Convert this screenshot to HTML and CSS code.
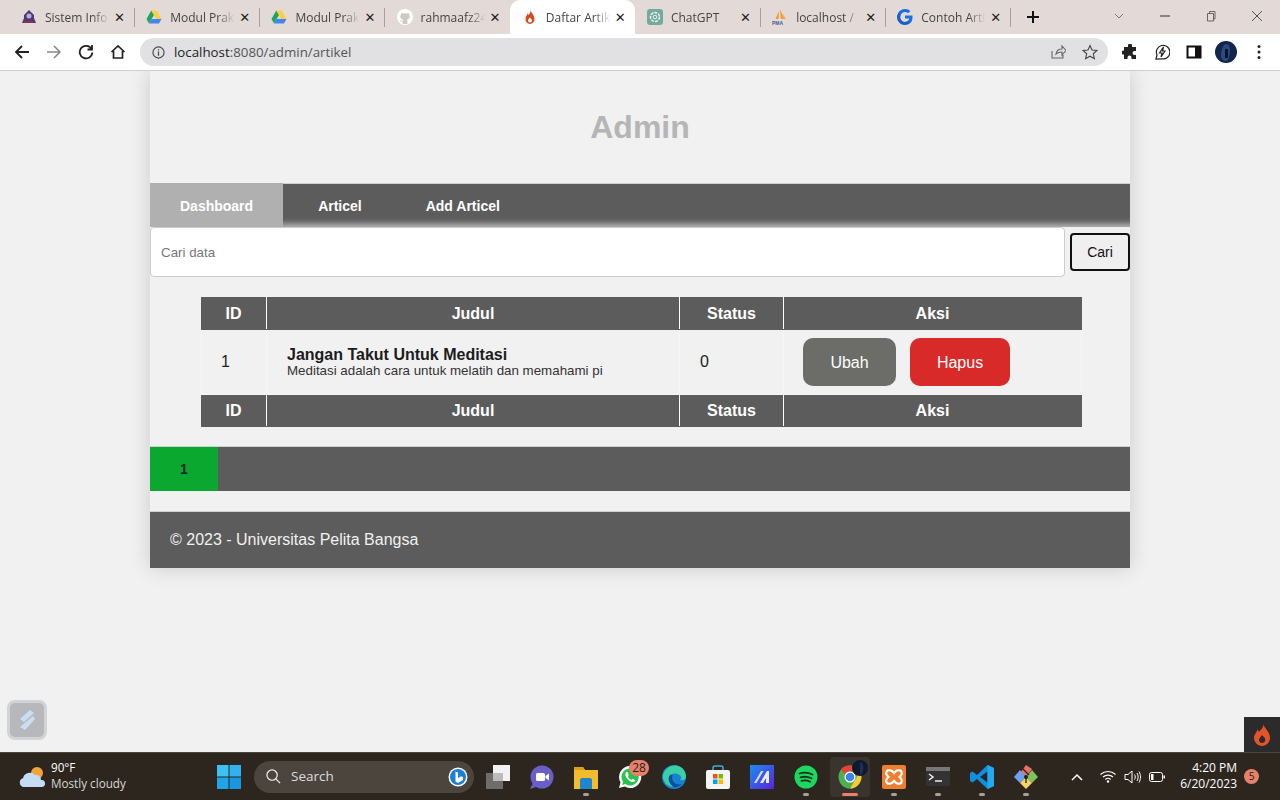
FILE: index.html
```html
<!DOCTYPE html>
<html lang="id">
<head>
<meta charset="utf-8">
<title>Daftar Artikel</title>
<link rel="stylesheet" href="styles.css">
</head>
<body>
<div class="tabstrip">
  <div class="tab sep">
    <svg class="fav" viewBox="0 0 16 16"><path d="M8 1 13 6v3l2 5H1l2-5V6z" fill="#4b3a78"/><circle cx="8" cy="7" r="2.500" fill="#b9aed8"/><path d="M3 12h10v2H3z" fill="#8a2f52"/></svg>
    <span class="tab-title">Sistem Info</span><span class="tab-x">✕</span>
  </div>
  <div class="tab sep">
    <svg class="fav" viewBox="0 0 16 16"><path d="M5.300 1.500.5 10 3 14.500 8 6z" fill="#1fa463"/><path d="M5.300 1.500h5.400L15.500 10h-5.200z" fill="#ffcf3f"/><path d="M3 14.500h10l2.500-4.500H5.600z" fill="#4285f4"/></svg>
    <span class="tab-title">Modul Prak</span><span class="tab-x">✕</span>
  </div>
  <div class="tab sep">
    <svg class="fav" viewBox="0 0 16 16"><path d="M5.300 1.500.5 10 3 14.500 8 6z" fill="#1fa463"/><path d="M5.300 1.500h5.400L15.500 10h-5.200z" fill="#ffcf3f"/><path d="M3 14.500h10l2.500-4.500H5.600z" fill="#4285f4"/></svg>
    <span class="tab-title">Modul Prak</span><span class="tab-x">✕</span>
  </div>
  <div class="tab">
    <svg class="fav" viewBox="0 0 16 16"><circle cx="8" cy="8" r="8" fill="#fff"/><path d="M5.600 15v-2.400C3.800 13 3.200 12 2.800 11c1 .2 1.500 1 2.800 1 0-.6.2-1 .5-1.300C4.300 10.400 3.300 9.400 3.300 7.600c0-.8.3-1.400.7-1.900-.2-.5-.1-1.200.1-1.800.8 0 1.400.4 1.900.7a7 7 0 0 1 4 0c.5-.3 1.100-.7 1.900-.7.2.6.3 1.300.1 1.800.4.500.7 1.100.7 1.900 0 1.800-1 2.800-2.800 3.100.3.300.5.800.5 1.500V15z" fill="#cfc8c5"/></svg>
    <span class="tab-title">rahmaafz24</span><span class="tab-x">✕</span>
  </div>
  <div class="tab active">
    <svg class="fav" viewBox="0 0 16 16"><path d="M8.500 1c.5 2.500-1 3.500-2 5-.3-.8-.7-1.200-1.200-1.500C5.300 6.500 3.500 7.500 3.500 10.300 3.500 13 5.500 15 8 15s4.500-2 4.500-4.700C12.500 6.500 9.800 4.500 8.500 1zM8 13.500c-1.200 0-2-.9-2-2 0-1.300 1.200-1.800 1.700-3 1 .9 2.300 1.800 2.300 3 0 1.100-.8 2-2 2z" fill="#d8491f"/></svg>
    <span class="tab-title">Daftar Artik</span><span class="tab-x">✕</span>
  </div>
  <div class="tab sep">
    <svg class="fav" viewBox="0 0 16 16"><rect width="16" height="16" rx="3" fill="#74aa9c"/><circle cx="8" cy="8" r="4.500" fill="none" stroke="#e8f2ef" stroke-width="1.500" stroke-dasharray="3 1"/><circle cx="8" cy="8" r="1.800" fill="none" stroke="#e8f2ef"/></svg>
    <span class="tab-title">ChatGPT</span><span class="tab-x">✕</span>
  </div>
  <div class="tab sep">
    <svg class="fav" viewBox="0 0 16 16"><path d="M8 0c1 3 3 6 4 10H9zM7 2 6.500 10H3.500z" fill="#f29a1f"/><path d="M10 4c1.500 2 3 4 4 6h-2z" fill="#e8b04a"/><text class="pma" x="0" y="15.500">PMA</text></svg>
    <span class="tab-title">localhost /</span><span class="tab-x">✕</span>
  </div>
  <div class="tab sep">
    <svg class="fav" viewBox="0 0 16 16"><path d="M15.500 8.200c0-.6 0-1.100-.1-1.600H8v3h4.300c-.2 1-.8 1.900-1.700 2.500v2h2.700c1.500-1.500 2.200-3.500 2.200-5.900z" fill="#1a6fe0"/><path d="M8 16c2.100 0 3.900-.7 5.300-1.900l-2.700-2c-.7.500-1.600.8-2.600.8-2 0-3.800-1.400-4.400-3.200H.9v2.100A8 8 0 0 0 8 16z" fill="#1a5fc8"/><path d="M3.600 9.700a4.800 4.800 0 0 1 0-3.100V4.500H.9a8 8 0 0 0 0 7.300z" fill="#1a5fc8"/><path d="M8 3.100c1.200 0 2.200.4 3.100 1.200l2.300-2.300A7.700 7.700 0 0 0 8 0 8 8 0 0 0 .9 4.500l2.700 2.100C4.200 4.500 6 3.100 8 3.100z" fill="#1a6fe0"/></svg>
    <span class="tab-title">Contoh Arti</span><span class="tab-x">✕</span>
  </div>
  <svg class="newtab" viewBox="0 0 14 14"><path d="M7 1v12M1 7h12" stroke="#111" stroke-width="2"/></svg>
  <div class="winctl">
    <svg viewBox="0 0 12 12"><path d="M2 4l4 4 4-4" fill="none" stroke="#777"/></svg>
    <svg viewBox="0 0 12 12"><path d="M1 6h10" stroke="#333"/></svg>
    <svg viewBox="0 0 12 12"><path d="M2.500 3.500h6v7.500h-6zM4.500 3.500V1.500h5.500v7.500H8.500" fill="none" stroke="#666"/></svg>
    <svg viewBox="0 0 12 12"><path d="M1 1l10 10M11 1 1 11" stroke="#555"/></svg>
  </div>
</div>

<div class="toolbar">
  <div class="navbtns">
    <svg viewBox="0 0 16 16"><path d="M15 8H2M8 2 2 8l6 6" fill="none" stroke="#222" stroke-width="1.800"/></svg>
    <svg viewBox="0 0 16 16"><path d="M1 8h13M8 2l6 6-6 6" fill="none" stroke="#888" stroke-width="1.500"/></svg>
    <svg viewBox="0 0 16 16"><path d="M13.500 5A6.300 6.300 0 1 0 14.300 8.500M14 1v4.500H9.500" fill="none" stroke="#222" stroke-width="1.800"/></svg>
    <svg viewBox="0 0 16 16"><path d="M1.500 8 8 2l6.500 6M3.500 7v7h9V7" fill="none" stroke="#222" stroke-width="1.700"/></svg>
  </div>
  <div class="omnibox">
    <svg class="info" viewBox="0 0 14 14"><circle cx="7" cy="7" r="6" fill="none" stroke="#444" stroke-width="1.200"/><path d="M7 6v4.500M7 3.500v1.300" stroke="#444" stroke-width="1.300"/></svg>
    <span class="url"><b class="host">localhost</b>:8080/admin/artikel</span>
    <svg class="omni-ic share" viewBox="0 0 16 16"><path d="M2 7v7h11v-3M6 10c.5-3 3-5 6-5V2l4 4.500-4 4.500V8c-2.500 0-4.500.5-6 2z" fill="none" stroke="#666" stroke-width="1.100"/></svg>
    <svg class="omni-ic" viewBox="0 0 16 16"><path d="M8 1.500 10 6l5 .5-3.700 3.300 1.100 4.900L8 12.200l-4.400 2.500 1.100-4.900L1 6.500 6 6z" fill="none" stroke="#444" stroke-width="1.100"/></svg>
  </div>
  <div class="exts">
    <svg viewBox="0 0 16 16"><path d="M6 1.500a2 2 0 0 1 4 0V3h4v4h-1.500a2 2 0 0 0 0 4H14v4H9.500v-1.500a2 2 0 0 0-4 0V15H2v-4.500h-.5a2 2 0 0 1 0-4H2V3h4z" fill="#222"/></svg>
    <svg viewBox="0 0 16 16"><path d="M2 15 3 11A6.800 6.800 0 1 1 8 14.800zM9.500 3 5.500 9H8l-1 4 4-6H8.500z" fill="none" stroke="#222" stroke-width="1.200"/></svg>
    <svg viewBox="0 0 16 16"><path d="M1.500 2.500h13v11h-13z" fill="#fff" stroke="#111" stroke-width="2"/><path d="M9 2.500h5.500v11H9z" fill="#111"/></svg>
    <svg class="avatar" viewBox="0 0 22 22"><circle cx="11" cy="11" r="11" fill="#12264a"/><path d="M11 3c3 0 4 3 4 6s-1 11-4 11-5-2-5-6 2-11 5-11z" fill="#2a4a80"/><path d="M10 8h3v9h-3z" fill="#0a1226"/></svg>
    <svg class="kebab" viewBox="0 0 4 16"><circle cx="2" cy="2.500" r="1.500" fill="#222"/><circle cx="2" cy="8" r="1.500" fill="#222"/><circle cx="2" cy="13.500" r="1.500" fill="#222"/></svg>
  </div>
</div>

<div class="viewport">
  <div class="container">
    <header class="site-head"><h1>Admin</h1></header>
    <nav class="site-nav">
      <a class="nav-link current">Dashboard</a>
      <a class="nav-link">Articel</a>
      <a class="nav-link">Add Articel</a>
    </nav>
    <form class="search">
      <input class="search-input" type="text" placeholder="Cari data">
      <button class="search-btn" type="button">Cari</button>
    </form>
    <table class="data">
      <colgroup><col class="c-id"><col class="c-title"><col class="c-status"><col class="c-act"></colgroup>
      <thead><tr><th>ID</th><th>Judul</th><th>Status</th><th>Aksi</th></tr></thead>
      <tbody>
        <tr>
          <td>1</td>
          <td><strong class="art-title">Jangan Takut Untuk Meditasi</strong><span class="art-desc">Meditasi adalah cara untuk melatih dan memahami pi</span></td>
          <td>0</td>
          <td><div class="acts"><a class="btn ubah">Ubah</a><a class="btn hapus">Hapus</a></div></td>
        </tr>
      </tbody>
      <tfoot><tr><th>ID</th><th>Judul</th><th>Status</th><th>Aksi</th></tr></tfoot>
    </table>
    <div class="pager"><a class="page-cur">1</a></div>
    <footer class="site-foot">© 2023 - Universitas Pelita Bangsa</footer>
  </div>

  <div class="float-s">
    <svg viewBox="0 0 24 24"><path d="M5 11 15 2l4 3L9 14zM5 19l13-11 2 3-10 11z" fill="#c9def3"/></svg>
  </div>
  <div class="ci-bar">
    <svg viewBox="0 0 18 22"><path d="M10 0c1 4-2 5-4 8-.4-1.300-1-2-1.800-2.500C4.500 8 1 10 1 14c0 4 3.500 8 8 8s8-4 8-8C17 8 12 5 10 0zM9 19c-2 0-3-1.500-3-3 0-2 2-3 3-5 1.500 1.500 3.300 3 3.300 5 0 1.500-1.300 3-3.300 3z" fill="#e5532b"/></svg>
  </div>
</div>

<div class="taskbar">
  <div class="weather">
    <svg viewBox="0 0 26 22"><circle cx="18" cy="7" r="6" fill="#f2a33a"/><path d="M5 21a4.500 4.500 0 0 1-1-8.800A7 7 0 0 1 16 9a5 5 0 0 1 6 5 3.500 3.500 0 0 1 1 7z" fill="#c4dcf5"/></svg>
    <div class="w-text"><span class="w-temp">90°F</span><span class="w-desc">Mostly cloudy</span></div>
  </div>
  <div class="slot">
    <svg class="ic" viewBox="0 0 24 24"><path d="M0 0h11.500v11.500H0z" fill="#3fc0f2"/><path d="M12.500 0H24v11.500H12.500z" fill="#2fb2ee"/><path d="M0 12.500h11.500V24H0z" fill="#1ea4e8"/><path d="M12.500 12.500H24V24H12.500z" fill="#1897e0"/></svg>
  </div>
  <div class="tb-search">
    <svg class="mag" viewBox="0 0 16 16"><circle cx="6.500" cy="6.500" r="5.500" fill="none" stroke="#eee" stroke-width="1.300"/><path d="M10.500 10.500 15 15" stroke="#eee" stroke-width="1.300"/></svg>
    <span class="s-label">Search</span>
    <svg class="bing" viewBox="0 0 20 20"><circle cx="10" cy="10" r="9.500" fill="#fff"/><circle cx="10" cy="10" r="8" fill="#1b7fd6"/><path d="M7.500 4.500 10 5.500V11l3-1.500-2-1 4 1.500v3L10 16l-2.500-1.500z" fill="#fff"/></svg>
  </div>
  <div class="slot">
    <svg class="ic" viewBox="0 0 24 24"><rect x="0" y="8" width="17" height="16" fill="#6f6c69"/><rect x="7" y="0" width="17" height="16" fill="#f2f2f2"/><rect x="7" y="8" width="10" height="8" fill="#bdbbb9"/></svg>
  </div>
  <div class="slot">
    <svg class="ic" viewBox="0 0 24 24"><circle cx="12" cy="12" r="11.500" fill="#6a5fc8"/><path d="M0 24l3-6 3 4z" fill="#6a5fc8"/><rect x="6" y="8" width="9" height="8" rx="1.500" fill="#fff"/><path d="M15.500 11 19 8.500v7L15.500 13z" fill="#fff"/></svg>
  </div>
  <div class="slot dot">
    <svg class="ic" viewBox="0 0 24 24"><path d="M0 2h9l2 3h13v19H0z" fill="#f4bc2c"/><path d="M0 2h9l2 3H0z" fill="#d9a21e"/><path d="M6 15c0-1 1-2 2-2h8c1 0 2 1 2 2v9H6z" fill="#1c86d1"/></svg>
  </div>
  <div class="slot">
    <svg class="ic" viewBox="0 0 24 24"><path d="M12 1a11 11 0 0 0-9.500 16.500L1 23l5.700-1.500A11 11 0 1 0 12 1z" fill="#fff"/><path d="M12 3.500a8.500 8.500 0 0 0-7 13.300L4.200 20l3.300-.9A8.500 8.500 0 1 0 12 3.500z" fill="#2ac34f"/><path d="M8.500 7c-1 .5-1.500 2-1 3.500 1 3 3.500 5.500 6.500 6.500 1.500.3 3-.5 3.300-1.800l-2.600-1.500-1.200 1.200c-1.500-.7-3-2-3.700-3.700l1-1.200L9.500 7z" fill="#fff"/></svg>
    <span class="count">28</span>
  </div>
  <div class="slot">
    <svg class="ic" viewBox="0 0 24 24"><circle cx="12" cy="12" r="12" fill="#1681d4"/><path d="M1 10C3 3 9 0 14 .5 20 1.200 24 6 24 12c0 2.500-3 4-6 3 1.500-1 2-3-.5-5-3-2.500-8-2-10 1-2 3 0 8 4 11C6 22 0 17 1 10z" fill="#3ad0a6"/><path d="M7.500 11c-2 3 0 8 4 11 2.500.5 6-.5 8.500-3-3 1-7 .5-9-3-1-2-1-4-.5-6-1.500-.500-2.500 0-3 1z" fill="#0c4f9c"/></svg>
  </div>
  <div class="slot">
    <svg class="ic" viewBox="0 0 24 24"><path d="M7 6V3c0-1.500 1-2 2-2h6c1 0 2 .5 2 2v3" fill="none" stroke="#3bb0d8" stroke-width="1.500"/><rect y="5" width="24" height="19" rx="2" fill="#f4f4f4"/><path d="M7 9h4.500v4.500H7z" fill="#f25022"/><path d="M12.500 9H17v4.500h-4.500z" fill="#7fba00"/><path d="M7 14.500h4.500V19H7z" fill="#00a4ef"/><path d="M12.500 14.500H17V19h-4.500z" fill="#ffb900"/></svg>
  </div>
  <div class="slot">
    <svg class="ic" viewBox="0 0 24 24"><defs><linearGradient id="ma" x1="0" y1="0" x2="1" y2="1"><stop offset="0" stop-color="#1a8ef0"/><stop offset="1" stop-color="#5a22e0"/></linearGradient></defs><rect width="24" height="24" fill="url(#ma)"/><path d="M4 18 11 6h2.500L6.500 18z" fill="#cfd8ff"/><path d="M10 18 17 6h2v12h-3v-5l-3 5z" fill="#e8ecff"/></svg>
  </div>
  <div class="slot dot">
    <svg class="ic" viewBox="0 0 24 24"><circle cx="12" cy="12" r="11.500" fill="#1ed760"/><path d="M5.500 8.500c4.500-1.300 9-1 13 1M6.500 12.300c3.800-1 7.500-.7 11 1M7.500 15.800c3-.7 6-.5 8.500 .9" fill="none" stroke="#10341d" stroke-width="1.800" stroke-linecap="round"/></svg>
  </div>
  <div class="slot current-app">
    <svg class="ic" viewBox="0 0 24 24"><circle cx="12" cy="12" r="11.500" fill="#4caf50"/><path d="M12 .5A11.500 11.500 0 0 1 22 6.500H12a5.500 5.500 0 0 0-5 3L3 4a11.500 11.500 0 0 1 9-3.500z" fill="#e54335"/><path d="M22 6.500A11.500 11.500 0 0 1 12 23.500l5-8.500a5.500 5.500 0 0 0 0-8.500z" fill="#fcc934"/><circle cx="12" cy="12" r="5.500" fill="#fff"/><circle cx="12" cy="12" r="4.300" fill="#3f80ea"/></svg>
    <svg class="profile" viewBox="0 0 14 14"><circle cx="7" cy="7" r="7" fill="#0f1a30"/><path d="M7 2c2 0 3 2 3 5s-1 6-3 6z" fill="#1e2f52"/></svg>
  </div>
  <div class="slot dot">
    <svg class="ic" viewBox="0 0 24 24"><rect width="24" height="24" rx="2" fill="#ef7f2f"/><path d="M5 6c2-1.500 4.500-1 7 2 2.500-3 5-3.500 7-2 1.500 1.500 1 4-1.500 6 2.500 2 3 4.500 1.500 6-2 1.500-4.500 1-7-2-2.500 3-5 3.500-7 2-1.500-1.500-1-4 1.500-6C4 10 3.500 7.500 5 6z" fill="none" stroke="#fff" stroke-width="2.200"/></svg>
  </div>
  <div class="slot dot">
    <svg class="ic" viewBox="0 0 24 24"><rect y="2" width="24" height="19" rx="1.500" fill="#333"/><rect y="2" width="24" height="4" fill="#777"/><path d="M3 9l4 3-4 3" fill="none" stroke="#eee" stroke-width="1.500"/><path d="M9 16h7" stroke="#eee" stroke-width="1.500"/></svg>
  </div>
  <div class="slot dot">
    <svg class="ic" viewBox="0 0 24 24"><path d="M17.500 0 24 3v18l-6.500 3L7 14l-4.500 3.500L0 16v-8l2.500-1.500L7 10z" fill="#0e8fe0"/><path d="M17.500 6.500 10 12l7.500 5.500z" fill="#2c2620"/><path d="M17.500 0 24 3v18l-6.500 3z" fill="#24a8f0"/></svg>
  </div>
  <div class="slot dot">
    <svg class="ic" viewBox="0 0 24 24"><path d="M12 12 7 7l5-7 6 4z" fill="#ee6f6a"/><path d="M12 12 18 5l6 7-6 6z" fill="#7fc15a"/><path d="M12 12 6 5l-6 7 6 6z" fill="#6fa0f0"/><path d="M12 12l6 6-6 6-6-6z" fill="#f4d468"/><circle cx="12" cy="12" r="2" fill="#222"/><path d="M12 12v6M9 4l6 6" stroke="#222" stroke-width="1.300"/></svg>
  </div>
  <div class="tray">
    <svg class="chev" viewBox="0 0 12 8"><path d="M1 7l5-5 5 5" fill="none" stroke="#fff" stroke-width="1.500"/></svg>
    <svg class="wifi" viewBox="0 0 16 13"><path d="M.5 4.500a11 11 0 0 1 15 0M3 7a7.500 7.500 0 0 1 10 0M5.300 9.500a4 4 0 0 1 5.400 0" fill="none" stroke="#fff" stroke-width="1.100"/><circle cx="8" cy="11.500" r="1.200" fill="#fff"/></svg>
    <svg class="vol" viewBox="0 0 17 14"><path d="M1 4.500h3L8 1v12L4 9.500H1z" fill="none" stroke="#fff"/><path d="M10.500 4.500c1 1.500 1 3.500 0 5M13 3c1.500 2.500 1.500 5.500 0 8M15 1.500c2 3.500 2 7.500 0 11" fill="none" stroke="#fff"/></svg>
    <svg class="batt" viewBox="0 0 16 10"><rect x=".5" y=".5" width="13" height="9" rx="2" fill="none" stroke="#fff"/><path d="M2 2h2.500v6H2zM14.500 3.500H16v3h-1.500z" fill="#fff"/></svg>
    <div class="clock"><span>4:20 PM</span><span>6/20/2023</span></div>
    <span class="notif">5</span>
  </div>
</div>
</body>
</html>
```

FILE: styles.css
```css
* { box-sizing: border-box; }
html, body { height: 100%; }
body {
  margin: 0;
  height: 800px;
  overflow: hidden;
  display: flex;
  flex-direction: column;
  background: #f1f1f1;
  font-family: "Liberation Sans", Arial, sans-serif;
  color: #222;
}

/* browser tab strip */
.tabstrip {
  height: 34px;
  flex: none;
  display: flex;
  align-items: stretch;
  padding-left: 9.500px;
  background: #e3dad7;
  font-family: "Open Sans", "Noto Sans", sans-serif;
}
.tab {
  position: relative;
  flex: none;
  width: 125.200px;
  display: flex;
  align-items: center;
  padding: 0 0 0 11.500px;
  font-size: 12px;
  color: #444;
}
.tab.sep::after {
  content: "";
  position: absolute;
  right: 0;
  top: 8px;
  height: 19px;
  width: 1px;
  background: #a89f9c;
}
.tab.active {
  background: #fff;
  border-radius: 10px 10px 0 0;
}
.fav { width: 16px; height: 16px; flex: none; margin-right: 8px; }
.pma { font: bold 5px "Liberation Sans", sans-serif; fill: #4060a0; }
.tab-title {
  width: 68px;
  flex: none;
  overflow: hidden;
  white-space: nowrap;
  -webkit-mask-image: linear-gradient(to right, #000 70%, transparent 95%);
  mask-image: linear-gradient(to right, #000 70%, transparent 95%);
}
.tab-x {
  margin-left: 1px;
  font: bold 13px "DejaVu Sans", sans-serif;
  color: #222;
}
.newtab { width: 14px; height: 14px; align-self: center; margin-left: 15px; }
.winctl {
  margin-left: auto;
  width: 167px;
  display: flex;
  justify-content: space-between;
  align-items: center;
  padding: 0 17px 3px 0;
}
.winctl svg { width: 12px; height: 12px; }

/* browser toolbar */
.toolbar {
  height: 37px;
  flex: none;
  display: flex;
  align-items: flex-start;
  padding-top: 4px;
  background: #fff;
  border-bottom: 1px solid #cfcfcf;
  position: relative;
  z-index: 2;
}
.navbtns {
  width: 140px;
  height: 28px;
  flex: none;
  display: flex;
  align-items: center;
  gap: 16px;
  padding-left: 14px;
}
.navbtns svg { width: 16px; height: 16px; }
.omnibox {
  width: 968px;
  height: 28px;
  flex: none;
  display: flex;
  align-items: center;
  padding: 0 10px 0 12px;
  border-radius: 14px;
  background: #e1e0e2;
}
.info { width: 13px; height: 13px; flex: none; margin-right: 9px; }
.url {
  flex: 1;
  font: 13.3px "Open Sans", "Noto Sans", sans-serif;
  color: #555;
}
.host { font-weight: 400; color: #222; }
.omni-ic { width: 16px; height: 16px; flex: none; }
.share { margin-right: 16px; }
.exts {
  flex: 1;
  height: 28px;
  display: flex;
  align-items: center;
  padding-left: 14px;
}
.exts svg { width: 16px; height: 16px; flex: none; margin-right: 16px; }
.exts .avatar { width: 22px; height: 22px; margin-left: -3px; margin-right: 20px; }
.exts .kebab { width: 4px; margin-right: 0; }

/* page */
.viewport {
  flex: 1;
  position: relative;
  overflow: hidden;
  background: #f1f1f1;
}
.container {
  width: 980px;
  margin: 0 auto;
  background: #f1f1f1;
  box-shadow: 0 0 20px rgba(0, 0, 0, .16);
}
.site-head {
  height: 112px;
  display: flex;
  align-items: center;
  justify-content: center;
}
.site-head h1 {
  margin: 0;
  font-size: 32px;
  font-weight: 700;
  color: #b5b5b5;
}
.site-nav {
  height: 44px;
  display: flex;
  gap: 4px;
  background: #5c5c5c;
  box-shadow: inset 0 -8px 6px -5px rgba(255, 255, 255, .6);
  border-top: 1px solid #cfcfcf;
}
.nav-link {
  padding: 2px 30px 0;
  margin-top: -1px;
  display: flex;
  align-items: center;
  font-size: 14px;
  font-weight: 700;
  color: #fff;
}
.nav-link.current { background: #b0b0b0; margin-right: 1px; }
.search {
  display: flex;
  align-items: center;
  gap: 5px;
  height: 50px;
}
.search-input {
  flex: 1;
  height: 50px;
  padding: 0 10px;
  border: 1px solid #ccc;
  border-radius: 4px;
  background: #fff;
  font: 13.33px "Liberation Sans", Arial, sans-serif;
}
.search-input::placeholder { color: #777; opacity: 1; }
.search-btn {
  width: 60px;
  height: 38px;
  padding: 0;
  border: 2px solid #111;
  border-radius: 4px;
  background: #efefef;
  font: 14px "Liberation Sans", Arial, sans-serif;
  color: #111;
}
.data {
  width: 880px;
  margin: 20px 49px 19px 51px;
  border-collapse: collapse;
  table-layout: fixed;
  font-size: 16px;
}
.c-id { width: 65px; }
.c-title { width: 413px; }
.c-status { width: 104px; }
.c-act { width: 298px; }
.data th {
  height: 32px;
  padding: 0;
  background: #5c5c5c;
  border: 1px solid #5c5c5c;
  border-left-color: #fff;
  border-right-color: #fff;
  font-size: 16px;
  font-weight: 700;
  color: #fff;
}
.data th:first-child { border-left-color: #5c5c5c; padding-right: 1px; }
.data th:last-child { border-right-color: #5c5c5c; }
.data td {
  height: 65px;
  padding: 0 20px;
  border: 1px solid #f6f6f6;
  color: #222;
}
.data td:first-child { padding-left: 19px; }
.art-title { display: block; font-size: 16px; line-height: 17px; color: #1c1c1c; }
.art-desc { display: block; font-size: 13.33px; line-height: 16px; color: #333; white-space: nowrap; }
.acts { display: flex; gap: 14px; margin-left: -1px; }
.btn {
  height: 48px;
  padding-top: 1px;
  display: flex;
  align-items: center;
  justify-content: center;
  border-radius: 10px;
  font-size: 16px;
  color: #fff;
}
.ubah { width: 93px; background: #6c6d69; }
.hapus { width: 100px; background: #d92a2a; }
.pager {
  height: 45px;
  display: flex;
  background: #5c5c5c;
  border-top: 1px solid #cfcfcf;
}
.page-cur {
  width: 68px;
  display: flex;
  align-items: center;
  justify-content: center;
  background: #0ba82f;
  font-size: 14px;
  font-weight: 700;
  color: #123;
}
.site-foot {
  height: 57px;
  margin-top: 20px;
  padding-left: 20px;
  display: flex;
  align-items: center;
  background: #5c5c5c;
  border-top: 1px solid #cfcfcf;
  font-size: 16px;
  color: #f1f1f1;
}

/* overlays on the page */
.float-s {
  position: absolute;
  left: 7px;
  bottom: 12px;
  width: 40px;
  height: 40px;
  display: flex;
  align-items: center;
  justify-content: center;
  border: 3px solid #d2d3d5;
  border-radius: 8px;
  background: #b6b8bc;
}
.float-s svg { width: 24px; height: 24px; }
.ci-bar {
  position: absolute;
  right: 0;
  bottom: 0;
  width: 36px;
  height: 35px;
  display: flex;
  align-items: center;
  justify-content: center;
  background: #2b2b2b;
}
.ci-bar svg { width: 18px; height: 22px; }

/* windows taskbar */
.taskbar {
  height: 48px;
  flex: none;
  display: flex;
  align-items: center;
  background: #2d261f;
  border-top: 1px solid #4a443d;
  font-family: "Open Sans", "Noto Sans", sans-serif;
  color: #fff;
}
.weather {
  width: 207px;
  flex: none;
  display: flex;
  align-items: center;
  gap: 6px;
  padding-left: 19px;
}
.weather svg { width: 26px; height: 22px; flex: none; }
.w-text { display: flex; flex-direction: column; padding-bottom: 3px; font-size: 11.7px; line-height: 16px; }
.w-desc { color: #d8d6d2; }
.slot {
  position: relative;
  width: 44px;
  height: 40px;
  flex: none;
  display: flex;
  align-items: center;
  justify-content: center;
}
.ic { width: 24px; height: 24px; }
.slot.dot::after,
.slot.current-app::after {
  content: "";
  position: absolute;
  left: 19px;
  bottom: 1px;
  width: 6px;
  height: 3px;
  border-radius: 2px;
  background: #a5a29e;
}
.slot.current-app {
  width: 40px;
  margin: 0 2px;
  border-radius: 4px;
  background: #3a342e;
}
.slot.current-app::after { left: 12px; width: 16px; background: #e8806a; }
.profile { position: absolute; width: 16px; height: 16px; right: 2px; top: 3px; }
.count {
  position: absolute;
  left: 21px;
  top: 3px;
  width: 20px;
  height: 16px;
  border-radius: 8px;
  background: #e8806a;
  color: #222;
  font-size: 12px;
  line-height: 16px;
  text-align: center;
}
.tb-search {
  width: 220px;
  height: 32px;
  flex: none;
  margin: 0 2px 0 3px;
  padding: 0 6px 0 12px;
  display: flex;
  align-items: center;
  border-radius: 16px;
  background: #4c453d;
}
.mag { width: 15px; height: 15px; flex: none; margin-right: 10px; }
.s-label { flex: 1; padding-bottom: 1px; font-size: 13.5px; color: #ddd; }
.bing { width: 20px; height: 20px; }
.tray {
  flex: 1;
  display: flex;
  align-items: center;
  padding-left: 23px;
}
.chev { width: 12px; height: 8px; margin-right: 17px; }
.wifi { width: 16px; height: 13px; margin-right: 8px; }
.vol { width: 17px; height: 14px; margin-right: 8px; }
.batt { width: 16px; height: 10px; }
.clock {
  width: 72px;
  padding-bottom: 2px;
  display: flex;
  flex-direction: column;
  align-items: flex-end;
  font-size: 12px;
  line-height: 16px;
}
.notif {
  width: 15px;
  height: 15px;
  margin-left: 7px;
  border-radius: 50%;
  background: #e8806a;
  color: #222;
  font-size: 10px;
  line-height: 15px;
  text-align: center;
}
```
